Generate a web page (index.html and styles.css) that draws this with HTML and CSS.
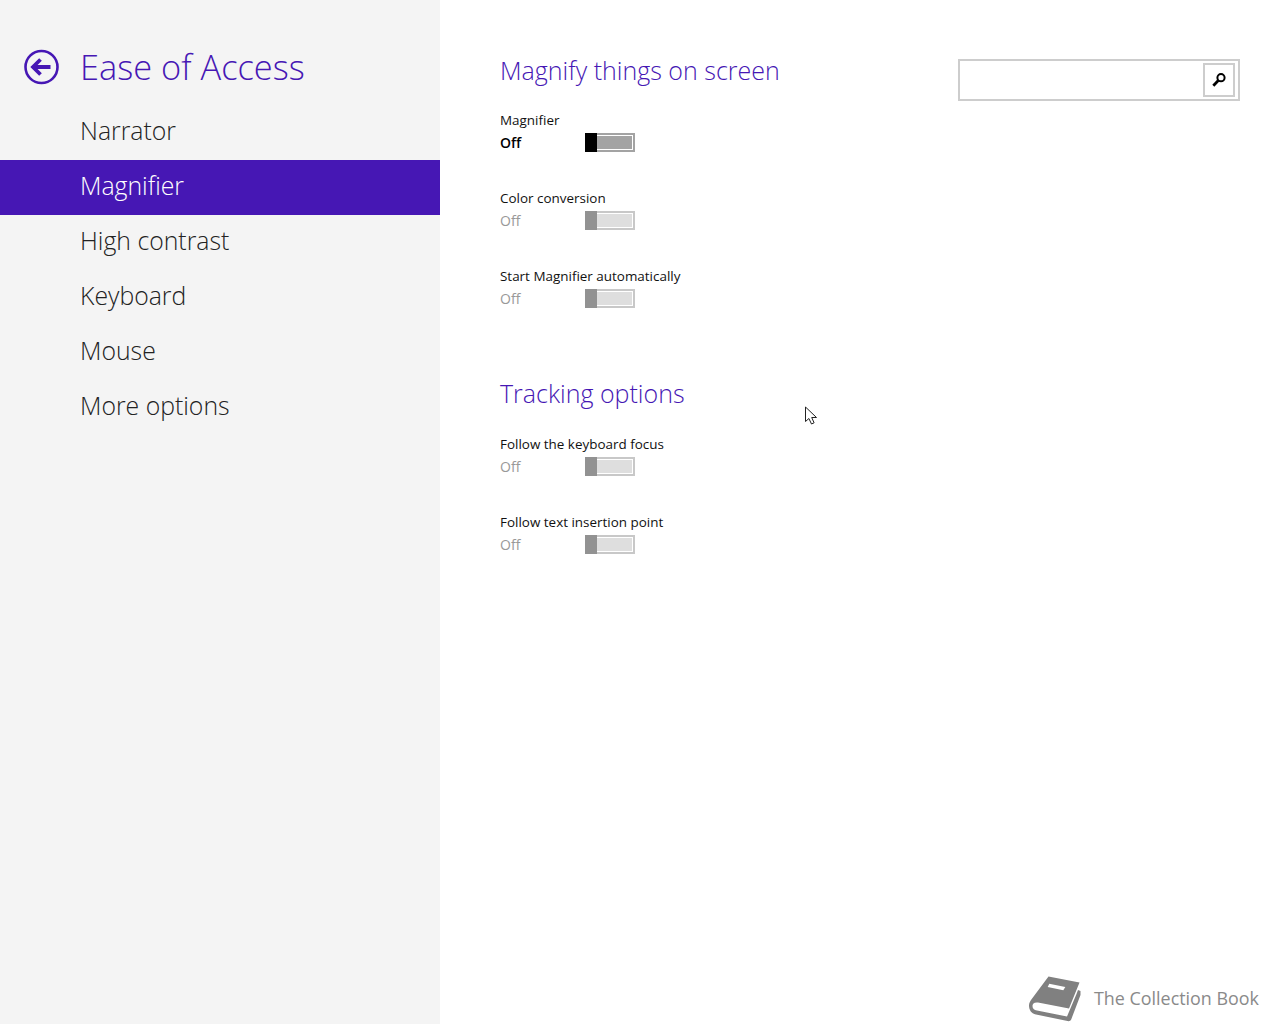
FILE: index.html
```html
<!DOCTYPE html>
<html lang="en">
<head>
<meta charset="utf-8">
<title>Ease of Access</title>
<link rel="stylesheet" href="styles.css">
</head>
<body>
<div class="page">
  <nav class="side">
    <header class="side-head">
      <svg class="back" width="36" height="36" viewBox="0 0 36 36" aria-hidden="true"><circle cx="17.500" cy="18" r="16" fill="none" stroke="#4617b4" stroke-width="2.6"/><path d="M9.500 18h17M16.500 10.500 9 18l7.500 7.500" fill="none" stroke="#4617b4" stroke-width="3.800"/></svg>
      <h1 class="side-title">Ease of Access</h1>
    </header>
    <ul class="menu">
      <li class="menu-item">Narrator</li>
      <li class="menu-item active">Magnifier</li>
      <li class="menu-item">High contrast</li>
      <li class="menu-item">Keyboard</li>
      <li class="menu-item">Mouse</li>
      <li class="menu-item">More options</li>
    </ul>
  </nav>
  <main class="main">
    <div class="content">
      <section class="group">
        <h2 class="group-title">Magnify things on screen</h2>
        <div class="setting">
          <div class="label">Magnifier</div>
          <div class="row"><span class="state on">Off</span><span class="toggle on"><span class="thumb"></span><span class="fill"></span></span></div>
        </div>
        <div class="setting">
          <div class="label">Color conversion</div>
          <div class="row"><span class="state">Off</span><span class="toggle"><span class="thumb"></span><span class="fill"></span></span></div>
        </div>
        <div class="setting">
          <div class="label">Start Magnifier automatically</div>
          <div class="row"><span class="state">Off</span><span class="toggle"><span class="thumb"></span><span class="fill"></span></span></div>
        </div>
      </section>
      <section class="group second">
        <h2 class="group-title">Tracking options</h2>
        <div class="setting">
          <div class="label">Follow the keyboard focus</div>
          <div class="row"><span class="state">Off</span><span class="toggle"><span class="thumb"></span><span class="fill"></span></span></div>
        </div>
        <div class="setting">
          <div class="label">Follow text insertion point</div>
          <div class="row"><span class="state">Off</span><span class="toggle"><span class="thumb"></span><span class="fill"></span></span></div>
        </div>
      </section>
    </div>
    <div class="search">
      <span class="search-btn">
        <svg width="14" height="14" viewBox="0 0 14 14" aria-hidden="true"><circle cx="9" cy="4.700" r="3.600" fill="none" stroke="#000" stroke-width="2"/><path d="M6.300 7.500 1.300 12.700" stroke="#000" stroke-width="2.800"/></svg>
      </span>
    </div>
  </main>
</div>
<svg class="cursor" width="14" height="20" viewBox="0 0 14 20" aria-hidden="true"><path d="M1.500 1v14.500l3.400-3 2.600 5.500 2.600-1.200-2.400-5.300h4.800z" fill="#fff" stroke="#222" stroke-width="1"/></svg>
<div class="brand">
  <svg width="60" height="52" viewBox="0 0 60 52" aria-hidden="true"><path d="M22.500 4.500 53.500 10.500 43 36.500 12 30.500C8 30 6.500 32 6.500 34 6.500 36.500 8 38 11 38.500L41 44.500 50.500 22 52 18 54.500 19V23L45 48Q44 49.500 41.500 49L10 42.500C5 41.500 3 37.500 3 33.500 3 31 4 29.500 5 28Z" fill="#808080"/><path d="M23.300 11.700 39.300 15 37.300 18.300 21.700 15Z" fill="#fff"/></svg>
  <span class="brand-name">The Collection Book</span>
</div>
</body>
</html>
```
FILE: styles.css
```css
* { box-sizing: border-box; }
html, body { margin: 0; padding: 0; height: 100%; }
body { background: #fff; font-family: "Open Sans", "Noto Sans", sans-serif; color: #111; overflow: hidden; position: relative; }
.page { display: flex; height: 1024px; }
.side { width: 440px; flex: none; background: #f4f4f4; }
.side-head { display: flex; align-items: center; height: 105px; padding: 29px 0 0 24px; margin: 0; }
.back { flex: none; margin-right: 20px; }
.side-title { margin: 0; font-size: 34.400px; font-weight: 300; color: #4617b4; line-height: 42px; }
.menu { list-style: none; margin: 0; padding: 0; }
.menu-item { height: 55px; line-height: 50px; padding-left: 80px; font-size: 24.800px; font-weight: 300; color: #222; }
.menu-item.active { background: #4617b4; color: #fff; }
.main { flex: 1; display: flex; justify-content: space-between; align-items: flex-start; padding: 0 40px 0 60px; }
.group { padding-top: 52px; }
.group.second { padding-top: 32px; }
.group-title { margin: 0 0 22px; font-size: 25px; font-weight: 300; line-height: 36px; color: #4617b4; }
.group:first-child .group-title { margin-bottom: 21px; }
.setting { height: 78px; }
.label { font-size: 13.450px; line-height: 22px; color: #111; }
.row { display: flex; align-items: center; height: 22px; }
.state { width: 85px; font-size: 14px; font-weight: 500; color: #999; }
.state.on { font-weight: 600; color: #000; }
.toggle { display: flex; width: 50px; height: 19px; margin-top: 1px; border: 2px solid #c8c8c8; border-left: 0; background: #fff; }
.thumb { width: 12px; height: 19px; margin-top: -2px; background: #929292; flex: none; }
.fill { flex: 1; background: #dedede; border: 1px solid #fff; border-left: 0; }
.toggle.on { border-color: #a3a3a3; }
.toggle.on .thumb { background: #000; }
.toggle.on .fill { background: #a3a3a3; }
.search { width: 282px; height: 42px; margin-top: 59px; border: 2px solid #cdcdcd; background: #fff; display: flex; justify-content: flex-end; padding: 2px 3px; }
.search-btn { width: 32px; height: 34px; border: 2px solid #cdcdcd; display: flex; align-items: center; justify-content: center; }
.cursor { position: absolute; left: 804px; top: 406px; }
.brand { position: absolute; left: 1026px; top: 972px; display: flex; align-items: center; gap: 8px; }
.brand-name { font-size: 17.900px; color: #8a8a8a; font-weight: 400; }
```
